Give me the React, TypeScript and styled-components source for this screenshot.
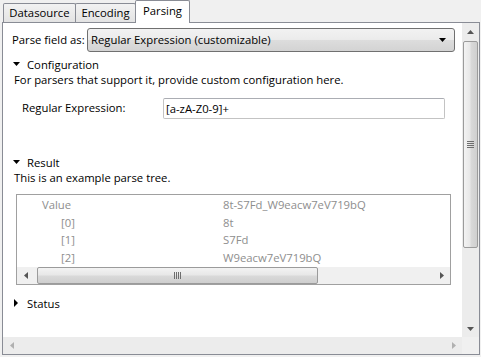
import { createGlobalStyle, styled } from "styled-components";

const GlobalStyle = createGlobalStyle`
  html, body {
    margin: 0;
    padding: 0;
  }
  body {
    background: #f0f0f0;
    font-family: "Open Sans", "Noto Sans", sans-serif;
    font-size: 11.3px;
    color: #000;
    white-space: nowrap;
  }
`;

const Window = styled.div`
  width: 481px;
  height: 357px;
  box-sizing: border-box;
  padding: 0 1px 2px 2px;
  display: flex;
  flex-direction: column;
  background: #f0f0f0;
`;

const TabBar = styled.div`
  display: flex;
  align-items: flex-end;
  height: 22px;
  padding-left: 1px;
  position: relative;
  z-index: 1;
`;

const Tab = styled.div<{ $active?: boolean; $width: number }>`
  box-sizing: border-box;
  width: ${p => p.$width}px;
  height: ${p => (p.$active ? 23 : 19)}px;
  margin-bottom: ${p => (p.$active ? -1 : 0)}px;
  margin-left: -1px;
  border: 1px solid #898c95;
  border-bottom: ${p => (p.$active ? "none" : "0")};
  border-radius: 2px 2px 0 0;
  background: ${p => (p.$active ? "#fff" : "linear-gradient(#f2f2f2, #e3e3e3)")};
  display: flex;
  justify-content: center;
  align-items: ${p => (p.$active ? "flex-start" : "center")};
  padding-top: ${p => (p.$active ? 2 : 0)}px;
  line-height: 16px;
  &:first-child {
    margin-left: 0;
  }
`;

const Panel = styled.div`
  flex: 1;
  border: 1px solid #898c95;
  background: #fff;
  display: grid;
  grid-template-columns: 459px 17px;
  grid-template-rows: 314px 17px;
`;

const Content = styled.div`
  overflow: hidden;
  display: flex;
  flex-direction: column;
  padding-top: 5px;
`;

const ParseRow = styled.div`
  display: flex;
  align-items: center;
  height: 23px;
  padding-left: 9px;
`;

const Label = styled.span<{ $width: number }>`
  width: ${p => p.$width}px;
  flex-shrink: 0;
  line-height: 16px;
`;

const Combo = styled.div`
  box-sizing: border-box;
  width: 368px;
  height: 24px;
  border: 1px solid #707070;
  border-radius: 3px;
  background: linear-gradient(#f2f2f2 0%, #ebebeb 50%, #dddddd 50%, #d3d3d3 100%);
  display: flex;
  align-items: center;
  justify-content: space-between;
  padding: 0 8px 0 3px;
`;

const SectionHeader = styled.div<{ $top: number }>`
  display: flex;
  align-items: center;
  height: 16px;
  margin-top: ${p => p.$top}px;
  padding-left: 10px;
`;

const Twisty = styled.span<{ $shift?: number }>`
  width: 14px;
  box-sizing: border-box;
  padding-left: ${p => p.$shift ?? 0}px;
  display: flex;
  align-items: center;
`;

const Description = styled.div`
  padding-left: 11px;
  line-height: 16px;
`;

const FieldRow = styled.div`
  display: flex;
  align-items: flex-start;
  margin-top: 12px;
  padding-left: 19px;
`;

const TextInput = styled.div`
  box-sizing: border-box;
  width: 282px;
  height: 21px;
  border: 1px solid #c3c3c3;
  border-top-color: #abadb3;
  border-radius: 2px;
  display: flex;
  align-items: center;
  padding-left: 2px;
  margin-top: -2px;
`;

const Tree = styled.div`
  box-sizing: border-box;
  width: 435px;
  margin: 8px 0 0 13px;
  border: 1px solid #a0a0a0;
  display: flex;
  flex-direction: column;
`;

const TreeRows = styled.div`
  height: 72px;
  padding-top: 1px;
  box-sizing: border-box;
`;

const TreeRow = styled.div<{ $indent: number }>`
  display: flex;
  height: 17.5px;
  align-items: center;
  color: #8e8e8e;
  padding-left: ${p => p.$indent}px;
`;

const TreeKey = styled.span<{ $width: number }>`
  width: ${p => p.$width}px;
  flex-shrink: 0;
`;

const HBar = styled.div<{ $light?: boolean }>`
  height: 17px;
  display: flex;
  background: ${p => (p.$light ? "#f0f0f0" : "#ececec")};
`;

const VBar = styled.div`
  display: flex;
  flex-direction: column;
  background: #ececec;
`;

const ArrowButton = styled.div`
  width: 17px;
  height: 17px;
  flex-shrink: 0;
  display: flex;
  align-items: center;
  justify-content: center;
`;

const Track = styled.div`
  flex: 1;
`;

const HThumb = styled.div<{ $width: number }>`
  box-sizing: border-box;
  width: ${p => p.$width}px;
  margin-left: 3px;
  border: 1px solid #9b9b9b;
  border-radius: 2px;
  background: linear-gradient(#f3f3f3 0%, #e8e8e8 45%, #d9d9d9 55%, #cfcfcf 100%);
  display: flex;
  align-items: center;
  justify-content: center;
`;

const VThumb = styled.div<{ $height: number }>`
  box-sizing: border-box;
  height: ${p => p.$height}px;
  margin: 1px 1px 0 1px;
  border: 1px solid #9b9b9b;
  border-radius: 2px;
  background: linear-gradient(to right, #f3f3f3 0%, #e8e8e8 45%, #d9d9d9 55%, #cfcfcf 100%);
  display: flex;
  align-items: center;
  justify-content: center;
`;

const Grip = styled.div<{ $vertical?: boolean }>`
  display: flex;
  flex-direction: ${p => (p.$vertical ? "column" : "row")};
  gap: 1px;
  span {
    background: #6e6e6e;
    width: ${p => (p.$vertical ? "7px" : "1px")};
    height: ${p => (p.$vertical ? "1px" : "7px")};
  }
`;

const Corner = styled.div`
  background: #f0f0f0;
`;

type Dir = "up" | "down" | "left" | "right";

function Arrow({ dir, size = 7, color = "#404040" }: { dir: Dir; size?: number; color?: string }) {
  const half = size / 2;
  const depth = Math.ceil(size / 2);
  const vertical = dir === "up" || dir === "down";
  const w = vertical ? size : depth;
  const h = vertical ? depth : size;
  const d = {
    up: `M0 ${depth} L${half} 0 L${size} ${depth} Z`,
    down: `M0 0 L${size} 0 L${half} ${depth} Z`,
    left: `M${depth} 0 L${depth} ${size} L0 ${half} Z`,
    right: `M0 0 L${depth} ${half} L0 ${size} Z`,
  }[dir];
  return (
    <svg width={w} height={h} viewBox={`0 0 ${w} ${h}`}>
      <path d={d} fill={color} />
    </svg>
  );
}

const treeData = [
  { key: "Value", value: "8t-S7Fd_W9eacw7eV719bQ", indent: 25 },
  { key: "[0]", value: "8t", indent: 44 },
  { key: "[1]", value: "S7Fd", indent: 44 },
  { key: "[2]", value: "W9eacw7eV719bQ", indent: 44 },
];

export default function App() {
  return (
    <>
      <GlobalStyle />
      <Window>
        <TabBar>
          <Tab $width={73}>Datasource</Tab>
          <Tab $width={61}>Encoding</Tab>
          <Tab $width={55} $active>Parsing</Tab>
        </TabBar>
        <Panel>
          <Content>
            <ParseRow>
              <Label $width={75}>Parse field as:</Label>
              <Combo>
                <span>Regular Expression (customizable)</span>
                <Arrow dir="down" size={7} color="#000" />
              </Combo>
            </ParseRow>

            <SectionHeader $top={5}>
              <Twisty><Arrow dir="down" size={7} color="#000" /></Twisty>
              Configuration
            </SectionHeader>
            <Description>For parsers that support it, provide custom configuration here.</Description>
            <FieldRow>
              <Label $width={141}>Regular Expression:</Label>
              <TextInput>[a-zA-Z0-9]+</TextInput>
            </FieldRow>

            <SectionHeader $top={35}>
              <Twisty><Arrow dir="down" size={7} color="#000" /></Twisty>
              Result
            </SectionHeader>
            <Description>This is an example parse tree.</Description>
            <Tree>
              <TreeRows>
                {treeData.map(row => (
                  <TreeRow key={row.key} $indent={row.indent}>
                    <TreeKey $width={206 - row.indent}>{row.key}</TreeKey>
                    {row.value}
                  </TreeRow>
                ))}
              </TreeRows>
              <HBar $light>
                <ArrowButton><Arrow dir="left" size={7} color="#555" /></ArrowButton>
                <HThumb $width={281}>
                  <Grip><span /><span /><span /><span /></Grip>
                </HThumb>
                <Track />
                <ArrowButton><Arrow dir="right" size={7} color="#555" /></ArrowButton>
              </HBar>
            </Tree>

            <SectionHeader $top={10}>
              <Twisty $shift={1}><Arrow dir="right" size={8} color="#000" /></Twisty>
              Status
            </SectionHeader>
          </Content>

          <VBar>
            <ArrowButton><Arrow dir="up" size={7} color="#555" /></ArrowButton>
            <VThumb $height={207}>
              <Grip $vertical><span /><span /><span /><span /></Grip>
            </VThumb>
            <Track />
            <ArrowButton><Arrow dir="down" size={7} color="#555" /></ArrowButton>
          </VBar>

          <HBar>
            <ArrowButton><Arrow dir="left" size={7} color="#b0b0b0" /></ArrowButton>
            <Track />
            <ArrowButton><Arrow dir="right" size={7} color="#b0b0b0" /></ArrowButton>
          </HBar>
          <Corner />
        </Panel>
      </Window>
    </>
  );
}
